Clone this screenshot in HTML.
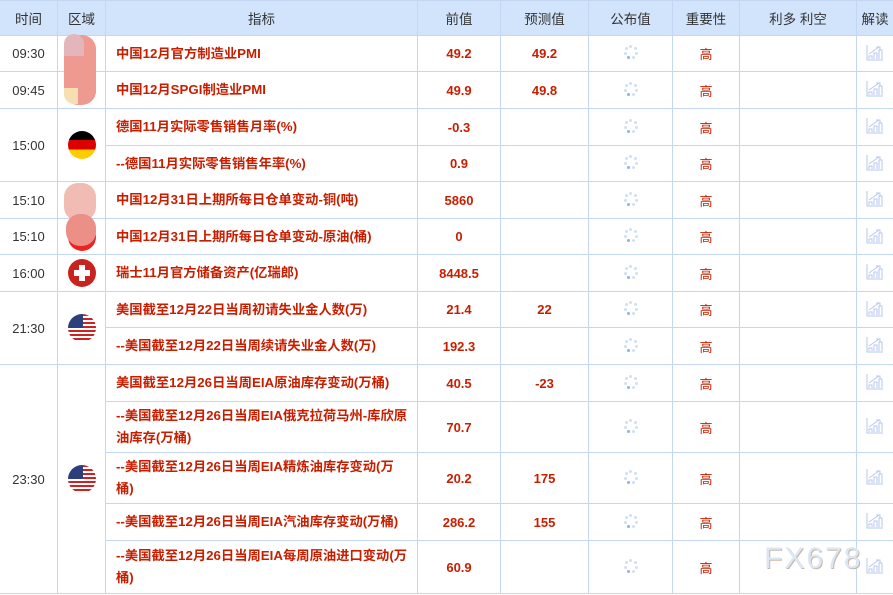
<!DOCTYPE html><html><head><meta charset="utf-8"><style>
body{margin:0;width:893px;height:595px;overflow:hidden;background:#fff;font-family:"Liberation Sans","Noto Sans CJK SC",sans-serif;}
table{border-collapse:collapse;table-layout:fixed;width:894px;position:absolute;left:-1px;top:0}
td,th{border:1px solid #c3d7f3;padding:0;text-align:center;font-size:13px;}
th{background:#d2e3fc;color:#333;font-weight:normal;height:34px;font-size:13.5px}
td{color:#c81e00;font-weight:bold}
td.t{color:#333;font-weight:normal;font-size:13px}
td.i{text-align:left;padding-left:10px;padding-right:0;line-height:22px;font-size:13.3px;white-space:nowrap;overflow:hidden}
.ld{display:inline-block;width:14px;height:14px;position:relative}
.ld i{position:absolute;width:3px;height:3px;border-radius:50%;background:#cfe0f7}
.fl{display:inline-block;width:28px;height:28px;border-radius:50%;vertical-align:middle;overflow:hidden}
.de{background:linear-gradient(#000 0 33%,#d00 33% 66%,#fc0 66%)}
.us{background:linear-gradient(#2c3f7c,#2c3f7c) 0 0/15px 14px no-repeat,repeating-linear-gradient(#c22 0 2px,#fff 2px 4px)}
.ch{background:#e22;}
.sw{background:#c8231e;position:relative}
.sw:before{content:"";position:absolute;left:11px;top:6px;width:6px;height:16px;background:#fff}
.sw:after{content:"";position:absolute;left:6px;top:11px;width:16px;height:6px;background:#fff}
.wm{position:absolute;left:764px;top:542px;font-size:30px;color:#dbe7f5;letter-spacing:2px;text-shadow:1px 1px 0 #c8b9a8;font-family:"Liberation Sans",sans-serif}
.blob{position:absolute;background:#eb9088;border-radius:14px}
</style></head><body>
<table>
<colgroup><col style="width:58px"><col style="width:48px"><col style="width:312px"><col style="width:83px"><col style="width:88px"><col style="width:84px"><col style="width:67px"><col style="width:117px"><col style="width:37px"></colgroup>
<tr><th>时间</th><th>区域</th><th>指标</th><th>前值</th><th>预测值</th><th>公布值</th><th>重要性</th><th>利多 利空</th><th>解读</th></tr>
<tbody id="b"></tbody>
</table>
<div class="blob" style="left:64px;top:35px;width:32px;height:70px;background:#ee9a90"></div>
<div class="blob" style="left:64px;top:34px;width:20px;height:22px;background:#e4b5bb;border-radius:10px 10px 0 0"></div>
<div class="blob" style="left:64px;top:88px;width:14px;height:16px;background:#f6dfb0;border-radius:0 0 0 10px"></div>
<div class="blob" style="left:64px;top:183px;width:32px;height:38px;background:#f0bcb4"></div>
<div class="blob" style="left:66px;top:214px;width:30px;height:32px;background:#ec8f86"></div>
<div class="wm">FX678</div>
<script>
var L='<span class="ld"><i style="left:5px;top:0"></i><i style="left:10px;top:2px"></i><i style="left:11px;top:7px"></i><i style="left:8px;top:11px"></i><i style="left:3px;top:11px;background:#8fb3e8"></i><i style="left:0;top:7px"></i><i style="left:1px;top:2px"></i></span>';
var C='<svg width="18" height="17" viewBox="0 0 18 17" fill="none" stroke="#b7c9ec" stroke-width="1"><path d="M1 1V16H17"/><path d="M3 15V12H6V15M8 15V9H11V15M13 15V6H16V15"/><path d="M3 10L13 3M10 3H14V6"/></svg>';
var f={de:'<span class="fl de"></span>',us:'<span class="fl us"></span>',sw:'<span class="fl sw"></span>',ch:'<span class="fl ch"></span>'};
var R=[
[36,'09:30',1,'ch',1,'中国12月官方制造业PMI','49.2','49.2'],
[37,'09:45',1,'ch',1,'中国12月SPGI制造业PMI','49.9','49.8'],
[37,'15:00',2,'de',2,'德国11月实际零售销售月率(%)','-0.3',''],
[36,null,0,null,0,'--德国11月实际零售销售年率(%)','0.9',''],
[37,'15:10',1,'ch',1,'中国12月31日上期所每日仓单变动-铜(吨)','5860',''],
[36,'15:10',1,'ch',1,'中国12月31日上期所每日仓单变动-原油(桶)','0',''],
[37,'16:00',1,'sw',1,'瑞士11月官方储备资产(亿瑞郎)','8448.5',''],
[36,'21:30',2,'us',2,'美国截至12月22日当周初请失业金人数(万)','21.4','22'],
[37,null,0,null,0,'--美国截至12月22日当周续请失业金人数(万)','192.3',''],
[37,'23:30',5,'us',5,'美国截至12月26日当周EIA原油库存变动(万桶)','40.5','-23'],
[51,null,0,null,0,'--美国截至12月26日当周EIA俄克拉荷马州-库欣原<br>油库存(万桶)','70.7',''],
[51,null,0,null,0,'--美国截至12月26日当周EIA精炼油库存变动(万<br>桶)','20.2','175'],
[37,null,0,null,0,'--美国截至12月26日当周EIA汽油库存变动(万桶)','286.2','155'],
[53,null,0,null,0,'--美国截至12月26日当周EIA每周原油进口变动(万<br>桶)','60.9','']];
var h='';R.forEach(function(r){h+='<tr style="height:'+r[0]+'px">';
if(r[1])h+='<td class="t" rowspan="'+r[2]+'">'+r[1]+'</td><td rowspan="'+r[4]+'">'+f[r[3]]+'</td>';
h+='<td class="i">'+r[5]+'</td><td>'+r[6]+'</td><td>'+r[7]+'</td><td>'+L+'</td><td style="font-weight:normal">高</td><td></td><td>'+C+'</td></tr>';});
document.getElementById('b').innerHTML=h;
</script>
</body></html>
